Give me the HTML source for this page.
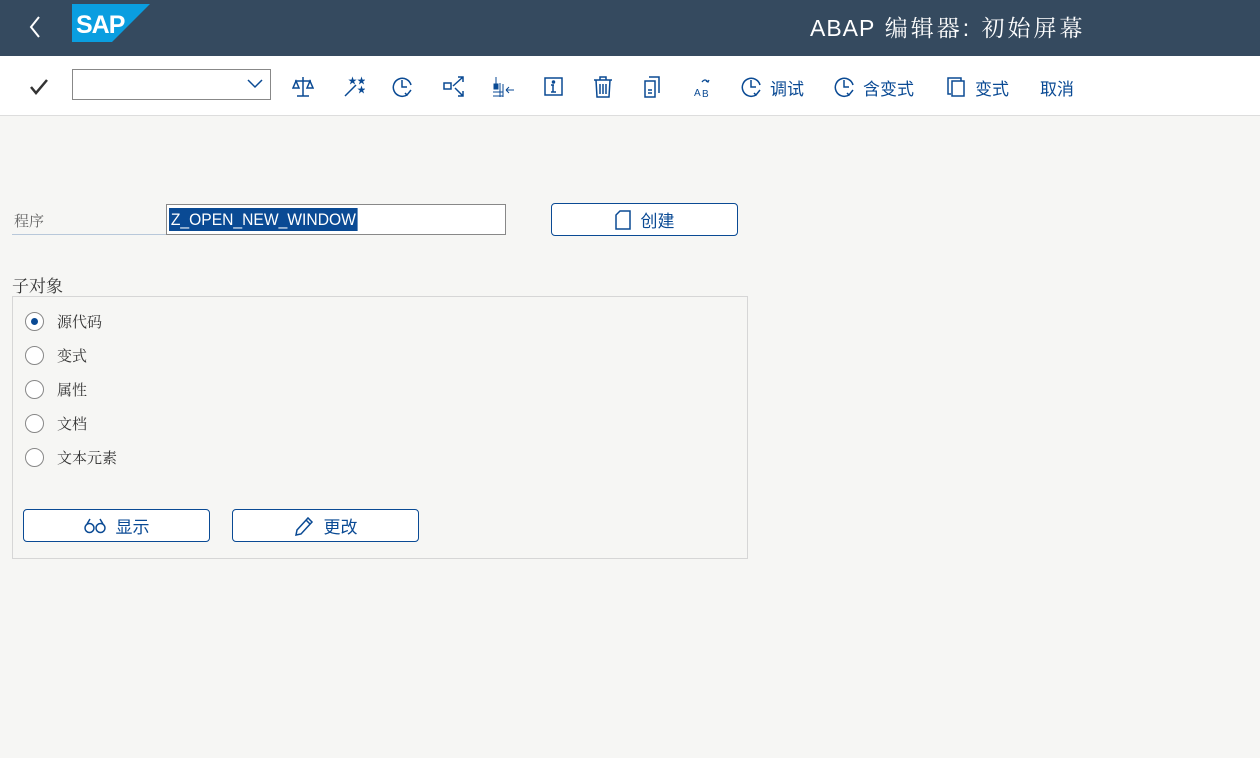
<!DOCTYPE html>
<html><head><meta charset="utf-8"><style>
*{margin:0;padding:0;box-sizing:border-box}
body{width:1260px;height:758px;background:#f6f6f4;font-family:"Liberation Sans","Noto Sans CJK SC",sans-serif;position:relative;overflow:hidden}
.hdr{position:absolute;left:0;top:0;width:1260px;height:56px;background:#354a5f}
.title{position:absolute;left:810px;top:10px;color:#fff;font-size:23px;font-family:"Liberation Sans","Noto Serif CJK SC",serif;letter-spacing:3px;white-space:nowrap}
.tb{position:absolute;left:0;top:56px;width:1260px;height:60px;background:#fff;border-bottom:1px solid #ddd}
.ic{position:absolute;top:20px}
.tt{position:absolute;top:19px;color:#0a4a94;font-size:17px}
.abs{position:absolute}
.lbl{color:#666;font-size:15px;font-family:"Noto Serif CJK SC",serif}
.btn{position:absolute;height:33px;border:1px solid #0a4a94;border-radius:4px;background:#fff;color:#0a4a94;font-size:17px;display:flex;align-items:center;justify-content:center;gap:10px}
.rad{position:absolute;left:25px;width:19px;height:19px;border:1px solid #888;border-radius:50%;background:#fff}
.rt{position:absolute;left:57px;font-size:15px;color:#333;font-family:"Noto Serif CJK SC",serif}
</style></head><body>
<div class="hdr">
<svg class="abs" style="left:28px;top:15px" width="14" height="24"><path d="M11 2 L3 12 L11 22" stroke="#fff" stroke-width="2" fill="none"/></svg>
<svg class="abs" style="left:72px;top:4px" width="78" height="38"><polygon points="0,0 78,0 40,38 0,38" fill="#0a9ee0"/><text x="4" y="29" font-family="Liberation Sans" font-weight="bold" font-size="25" fill="#fff" letter-spacing="-1">SAP</text></svg>
<div class="title"><span style="letter-spacing:1px">ABAP</span> 编辑器: 初始屏幕</div>
</div>
<div class="tb">
<svg class="abs" style="left:29px;top:22px" width="20" height="18"><path d="M2 9 L7 15 L18 2" stroke="#333" stroke-width="2.5" fill="none"/></svg>
<div class="abs" style="left:72px;top:13px;width:199px;height:31px;border:1px solid #888;background:#fff"></div>
<svg class="abs" style="left:247px;top:23px" width="16" height="10"><path d="M1 1 L8 8 L15 1" stroke="#0a4a94" stroke-width="1.5" fill="none"/></svg>
<svg class="ic" style="left:292px" width="22" height="22" stroke="#0a4a94" fill="none" stroke-width="1.5"><path d="M11 1V20M5 20H17M3 5H19M4 5L1 12H7ZM18 5L15 12H21Z"/></svg>
<svg class="ic" style="left:343px" width="22" height="22" stroke="#0a4a94" fill="none" stroke-width="1.5"><path d="M2 20L13 9"/><text x="5" y="8" font-size="9" fill="#0a4a94" stroke="none">★★</text><text x="14" y="17" font-size="9" fill="#0a4a94" stroke="none">★</text></svg>
<svg class="ic" style="left:392px" width="22" height="22" stroke="#0a4a94" fill="none" stroke-width="1.5"><path d="M15 19A9 9 0 1 1 19 9M10 4V11H15M13 17L15 19L19 14"/></svg>
<svg class="ic" style="left:443px" width="22" height="22" stroke="#0a4a94" fill="none" stroke-width="1.5"><rect x="1" y="7" width="7" height="6"/><path d="M10 10L20 1M15 1H20V6M12 12L20 20M15 20H20V15"/></svg>
<svg class="ic" style="left:492px" width="24" height="22" stroke="#0a4a94" fill="#0a4a94" stroke-width="1"><rect x="2" y="8" width="4" height="5"/><path d="M4 1V8M1 16H11M1 20H11M8 7V21M11 8V21" fill="none"/><path d="M14 14H22M14 14L17 11M14 14L17 17" fill="none"/></svg>
<svg class="ic" style="left:543px" width="22" height="22" stroke="#0a4a94" fill="none" stroke-width="1.5"><rect x="2" y="2" width="17" height="17"/><path d="M10 9V16M8 16H13M8 9H11" /><circle cx="10.5" cy="6" r="1" fill="#0a4a94"/></svg>
<svg class="ic" style="left:592px" width="22" height="22" stroke="#0a4a94" fill="none" stroke-width="1.5"><path d="M2 4H20M8 4V1H14V4M4 4L5 21H17L18 4M8 8V18M11 8V18M14 8V18"/></svg>
<svg class="ic" style="left:642px" width="22" height="22" stroke="#0a4a94" fill="none" stroke-width="1.5"><path d="M7 1H17V17M3 5H13V21H3ZM6 14H10M6 17H10"/></svg>
<svg class="ic" style="left:693px" width="22" height="22"><text x="1" y="20" font-size="10" fill="#0a4a94">A</text><text x="9" y="21" font-size="10" fill="#0a4a94">B</text><path d="M9 6Q12 2 15 6M13 5L15 6L16 4" stroke="#0a4a94" fill="none" stroke-width="1.3"/></svg>
<svg class="ic" style="left:741px" width="22" height="22" stroke="#0a4a94" fill="none" stroke-width="1.5"><path d="M15 19A9 9 0 1 1 19 9M10 4V11H15M13 17L15 19L19 14"/></svg>
<div class="tt" style="left:770px">调试</div>
<svg class="ic" style="left:834px" width="22" height="22" stroke="#0a4a94" fill="none" stroke-width="1.5"><path d="M15 19A9 9 0 1 1 19 9M10 4V11H15M13 17L15 19L19 14"/></svg>
<div class="tt" style="left:863px">含变式</div>
<svg class="ic" style="left:946px" width="22" height="22" stroke="#0a4a94" fill="none" stroke-width="1.5"><path d="M5 18H2V2H15V5"/><rect x="6" y="5" width="12" height="15"/></svg>
<div class="tt" style="left:975px">变式</div>
<div class="tt" style="left:1040px">取消</div>
</div>

<div class="abs lbl" style="left:14px;top:210px">程序</div>
<div class="abs" style="left:12px;top:234px;width:154px;height:1px;background:#b8c8da"></div>
<div class="abs" style="left:166px;top:204px;width:340px;height:31px;border:1px solid #888;background:#fff"></div>
<div class="abs" style="left:169px;top:208px;height:23px;background:#0a4a94;color:#fff;font-family:'Liberation Sans',sans-serif;font-size:17px;line-height:23px;padding:0 2px;transform:scaleX(0.92);transform-origin:left">Z_OPEN_NEW_WINDOW</div>
<div class="btn" style="left:551px;top:203px;width:187px"><svg width="16" height="20" stroke="#0a4a94" fill="none" stroke-width="1.5"><path d="M5 1H15V19H1V5Z"/></svg>创建</div>

<div class="abs" style="left:12px;top:272px;font-size:17px;color:#333;font-family:'Noto Serif CJK SC',serif">子对象</div>
<div class="abs" style="left:12px;top:296px;width:736px;height:263px;border:1px solid #d6d6d6"></div>
<div class="rad" style="top:312px"><div style="position:absolute;left:5px;top:5px;width:7px;height:7px;border-radius:50%;background:#0a4a94"></div></div>
<div class="rt" style="top:311px">源代码</div>
<div class="rad" style="top:346px"></div><div class="rt" style="top:345px">变式</div>
<div class="rad" style="top:380px"></div><div class="rt" style="top:379px">属性</div>
<div class="rad" style="top:414px"></div><div class="rt" style="top:413px">文档</div>
<div class="rad" style="top:448px"></div><div class="rt" style="top:447px">文本元素</div>

<div class="btn" style="left:23px;top:509px;width:187px"><svg width="22" height="16" stroke="#0a4a94" fill="none" stroke-width="1.5"><circle cx="5.5" cy="10" r="4.5"/><circle cx="16.5" cy="10" r="4.5"/><path d="M3 6L6 1M19 6L16 1"/></svg>显示</div>
<div class="btn" style="left:232px;top:509px;width:187px"><svg width="20" height="20" stroke="#0a4a94" fill="none" stroke-width="1.5"><path d="M2 19L3 14L14 2L18 6L7 18Z M12 4L16 8"/></svg>更改</div>
</body></html>
